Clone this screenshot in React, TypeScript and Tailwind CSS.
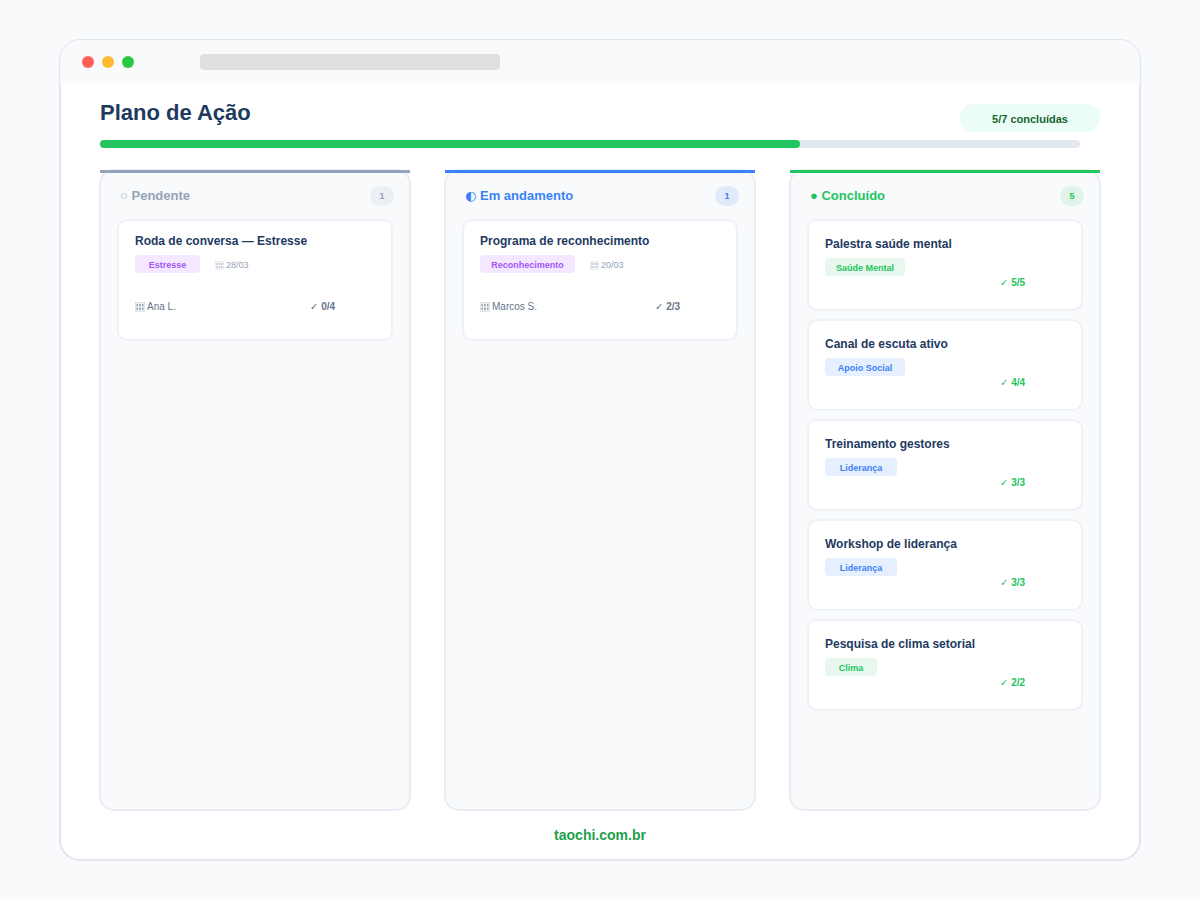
type Task = {
  title: string;
  tag: string;
  tagClass: string;
  date?: string;
  owner?: string;
  checks: string;
};

const purpleTag = 'bg-[#f3e8ff] text-[#a855f7]';
const greenTag = 'bg-[#e8f8ee] text-[#22c55e]';
const blueTag = 'bg-[#e6effd] text-[#3b82f6]';

const columns = [
  {
    name: 'Pendente',
    icon: '○',
    iconClass: '',
    barClass: 'bg-[#94a3b8]',
    textClass: 'text-[#94a3b8]',
    badgeClass: 'bg-[#eceff4] text-[#94a3b8]',
    tasks: [
      { title: 'Roda de conversa — Estresse', tag: 'Estresse', tagClass: `w-[65px] ${purpleTag}`, date: '28/03', owner: 'Ana L.', checks: '0/4' },
    ] as Task[],
  },
  {
    name: 'Em andamento',
    icon: '◐',
    iconClass: "font-['DejaVu_Sans',sans-serif]",
    barClass: 'bg-[#3b82f6]',
    textClass: 'text-[#3b82f6]',
    badgeClass: 'bg-[#e1eafa] text-[#3b82f6]',
    tasks: [
      { title: 'Programa de reconhecimento', tag: 'Reconhecimento', tagClass: `w-[95px] ${purpleTag}`, date: '20/03', owner: 'Marcos S.', checks: '2/3' },
    ] as Task[],
  },
  {
    name: 'Concluído',
    icon: '●',
    iconClass: '',
    barClass: 'bg-[#22c55e]',
    textClass: 'text-[#22c55e]',
    badgeClass: 'bg-[#e1f4e9] text-[#22c55e]',
    tasks: [
      { title: 'Palestra saúde mental', tag: 'Saúde Mental', tagClass: `w-[80px] ${greenTag}`, checks: '5/5' },
      { title: 'Canal de escuta ativo', tag: 'Apoio Social', tagClass: `w-[80px] ${blueTag}`, checks: '4/4' },
      { title: 'Treinamento gestores', tag: 'Liderança', tagClass: `w-[72px] ${blueTag}`, checks: '3/3' },
      { title: 'Workshop de liderança', tag: 'Liderança', tagClass: `w-[72px] ${blueTag}`, checks: '3/3' },
      { title: 'Pesquisa de clima setorial', tag: 'Clima', tagClass: `w-[52px] ${greenTag}`, checks: '2/2' },
    ] as Task[],
  },
];

// the little "missing glyph" box the reference shows in front of dates and names
function GlyphBox({ className }: { className: string }) {
  return (
    <svg viewBox="0 0 11 10" className={className} fill="currentColor">
      <rect x="0.25" y="0.25" width="10.5" height="9.5" fill="none" stroke="currentColor" strokeWidth="0.5" opacity="0.6" />
      <path d="M1.5 1.5h2v3h-2zM4.5 1.5h2v3h-2zM7.5 1.5h2v3h-2zM1.5 5.5h2v3h-2zM4.5 5.5h2v3h-2zM7.5 5.5h2v3h-2z" opacity="0.85" />
    </svg>
  );
}

function Check() {
  return <span className="font-['DejaVu_Sans',sans-serif] font-normal">✓</span>;
}

function OpenCard({ task }: { task: Task }) {
  return (
    <div className="h-[122px] rounded-[10px] border-2 border-[#eef1f6] bg-white px-[16px] pt-[13px]">
      <div className="text-[12px] leading-[15px] font-semibold text-[#1e3a5f]">{task.title}</div>
      <div className="mt-[6px] flex items-center gap-[15px]">
        <span className={`flex h-[18px] items-center justify-center rounded-[4px] pt-[4px] text-[9px] font-semibold ${task.tagClass}`}>{task.tag}</span>
        <span className="flex items-center gap-[2px] pt-[4px] text-[9px] text-[#94a3b8]">
          <GlyphBox className="mt-[-1px] h-[9px] w-[9px] opacity-70" />
          {task.date}
        </span>
      </div>
      <div className="mt-[27px] flex items-center text-[10px] leading-[14px]">
        <span className="flex w-[175px] items-center gap-[2px] text-[#64748b]">
          <GlyphBox className="h-[10px] w-[10px] opacity-70" />
          {task.owner}
        </span>
        <span className="text-[#64748b]"><Check /> <span className="font-semibold">{task.checks}</span></span>
      </div>
    </div>
  );
}

function DoneCard({ task }: { task: Task }) {
  return (
    <div className="h-[92px] rounded-[10px] border-2 border-[#eef1f6] bg-white px-[16px] pt-[16px]">
      <div className="text-[12px] leading-[15px] font-semibold text-[#1e3a5f]">{task.title}</div>
      <div className="mt-[6px] flex">
        <span className={`flex h-[18px] items-center justify-center rounded-[4px] pt-[4px] text-[9px] font-semibold ${task.tagClass}`}>{task.tag}</span>
      </div>
      <div className="ml-[175px] text-[10px] leading-[14px] text-[#22c55e]">
        <Check /> <span className="font-semibold">{task.checks}</span>
      </div>
    </div>
  );
}

export default function App() {
  return (
    <div className="min-h-[900px] bg-[#f8fafc] px-[59px] py-[39px] font-['Liberation_Sans',Inter,sans-serif]">
      <div className="flex h-[822px] flex-col rounded-[21px] border-2 border-[#e2e5ec] bg-white">
        {/* window chrome sits over the inner half of the border */}
        <div className="-mx-px -mt-px flex h-[44px] shrink-0 items-center rounded-t-[20px] bg-[#f8fafc] pl-[22px]">
          <div className="flex gap-[8px]">
            <span className="size-[12px] rounded-full bg-[#ff5f57]" />
            <span className="size-[12px] rounded-full bg-[#febc2e]" />
            <span className="size-[12px] rounded-full bg-[#28c840]" />
          </div>
          <div className="ml-[66px] h-[16px] w-[300px] rounded-[4px] bg-[#e0e0e0]" />
        </div>

        <div className="flex flex-1 flex-col px-[39px]">
          <div className="flex h-[56px] items-start justify-between">
            <h1 className="mt-[15px] text-[22px] leading-[28px] font-bold text-[#1e3a5f]">Plano de Ação</h1>
            <div className="mt-[20px] flex h-[28px] w-[140px] items-center justify-center rounded-full bg-[#ecfdf5] pt-[2px] text-[11px] font-semibold text-[#166534]">
              5/7 concluídas
            </div>
          </div>

          <div className="h-[8px] w-[980px] rounded-full bg-[#e2e8f0]">
            <div className="h-full w-[700px] rounded-full bg-[#22c55e]" />
          </div>

          <div className="-mx-px mt-[21px] grid h-[642px] grid-cols-3 gap-[33px]">
            {columns.map((col) => (
              <div key={col.name} className="relative rounded-[15px] border-2 border-[#e8ecf3] bg-[#f8fafc] px-[16px]">
                <div className={`absolute -top-px -right-px -left-px h-[3px] ${col.barClass}`} />
                <div className="flex h-[48px] items-center justify-between pt-[2px]">
                  <span className={`pl-[3px] text-[13px] font-semibold ${col.textClass}`}>
                    <span className={col.iconClass}>{col.icon}</span> {col.name}
                  </span>
                  <span className={`mr-[-1px] flex h-[20px] w-[24px] items-center justify-center rounded-full pt-[2px] text-[9px] font-semibold ${col.badgeClass}`}>
                    {col.tasks.length}
                  </span>
                </div>
                <div className="flex flex-col gap-[8px]">
                  {col.tasks.map((task) =>
                    task.owner ? <OpenCard key={task.title} task={task} /> : <DoneCard key={task.title} task={task} />
                  )}
                </div>
              </div>
            ))}
          </div>

          <div className="mt-[15px] text-center text-[14px] leading-[18px] font-bold text-[#22a04c]">taochi.com.br</div>
        </div>
      </div>
    </div>
  );
}
